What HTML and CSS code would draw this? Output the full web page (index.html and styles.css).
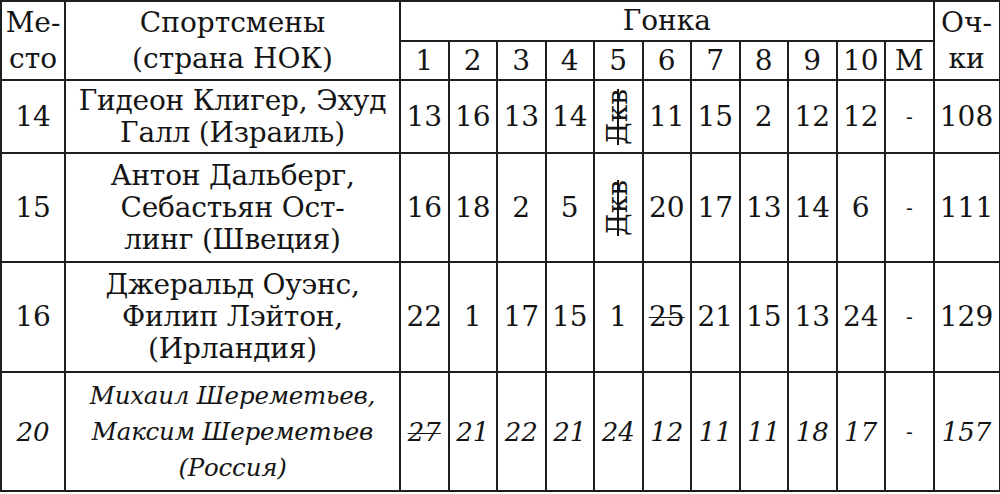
FILE: index.html
```html
<!DOCTYPE html>
<html lang="ru">
<head>
<meta charset="utf-8">
<title>Результаты</title>
<link rel="stylesheet" href="styles.css">
</head>
<body>
<table class="results">
  <colgroup>
    <col class="c-place">
    <col class="c-name">
    <col class="c-race"><col class="c-race"><col class="c-race"><col class="c-race"><col class="c-race">
    <col class="c-race"><col class="c-race"><col class="c-race"><col class="c-race"><col class="c-race">
    <col class="c-race">
    <col class="c-pts">
  </colgroup>
  <thead>
    <tr class="h1">
      <th rowspan="2">Ме-<br>сто</th>
      <th rowspan="2">Спортсмены<br>(страна НОК)</th>
      <th colspan="11">Гонка</th>
      <th rowspan="2">Оч-<br>ки</th>
    </tr>
    <tr class="h2">
      <th>1</th><th>2</th><th>3</th><th>4</th><th>5</th><th>6</th><th>7</th><th>8</th><th>9</th><th>10</th><th>М</th>
    </tr>
  </thead>
  <tbody>
    <tr class="r14">
      <td class="place">14</td>
      <td class="name">Гидеон Клигер, Эхуд<br>Галл (Израиль)</td>
      <td>13</td><td>16</td><td>13</td><td>14</td>
      <td class="dq-cell"><span class="dq">Дкв</span></td>
      <td>11</td><td>15</td><td>2</td><td>12</td><td>12</td><td class="dash">-</td><td>108</td>
    </tr>
    <tr class="r15">
      <td class="place">15</td>
      <td class="name">Антон Дальберг,<br>Себастьян Ост-<br>линг (Швеция)</td>
      <td>16</td><td>18</td><td>2</td><td>5</td>
      <td class="dq-cell"><span class="dq">Дкв</span></td>
      <td>20</td><td>17</td><td>13</td><td>14</td><td>6</td><td class="dash">-</td><td>111</td>
    </tr>
    <tr class="r16">
      <td class="place">16</td>
      <td class="name">Джеральд Оуэнс,<br>Филип Лэйтон,<br>(Ирландия)</td>
      <td>22</td><td>1</td><td>17</td><td>15</td><td>1</td>
      <td><s>25</s></td>
      <td>21</td><td>15</td><td>13</td><td>24</td><td class="dash">-</td><td>129</td>
    </tr>
    <tr class="r20 rus">
      <td class="place">20</td>
      <td class="name">Михаил Шереметьев,<br>Максим Шереметьев<br>(Россия)</td>
      <td><s>27</s></td>
      <td>21</td><td>22</td><td>21</td><td>24</td><td>12</td><td>11</td><td>11</td><td>18</td><td>17</td><td class="dash">-</td><td>157</td>
    </tr>
  </tbody>
</table>
</body>
</html>
```

FILE: styles.css
```css
html, body {
  margin: 0;
  padding: 0;
  background: #ffffff;
}

.results {
  width: 1000px;
  table-layout: fixed;
  border-collapse: collapse;
  font-family: "DejaVu Serif", "Liberation Serif", serif;
  font-size: 28px;
  color: #141414;
  margin: 0;
}

.results th,
.results td {
  border: 2px solid #1e1e1e;
  padding: 0;
  text-align: center;
  vertical-align: middle;
  font-weight: normal;
  line-height: 32px;
  white-space: nowrap;
  overflow: visible;
}

.c-place { width: 64px; }
.c-name { width: 335px; }
.c-race { width: 48.5px; }
.c-pts { width: 66px; }

.h1 { height: 40px; }
.h2 { height: 39px; }
.r14 { height: 73px; }
.r15 { height: 109px; }
.r16 { height: 110px; }
.r20 { height: 119px; }

.h1 th,
.h2 th {
  line-height: 36px;
}

.place {
  padding-left: 6px;
}

.name {
  line-height: 33px;
  letter-spacing: -0.2px;
}

.rus td {
  font-style: italic;
  font-size: 26px;
  line-height: 36px;
}

.rus td.name {
  font-size: 24.5px;
}

.results td.dash {
  font-style: normal;
  font-size: 20px;
}

.dq {
  display: inline-block;
  transform: rotate(-90deg);
  text-decoration: line-through;
  text-decoration-thickness: 1.5px;
  font-size: 28px;
  line-height: 28px;
  margin: 0 -20px;
}

s {
  text-decoration-thickness: 1px;
}
```
